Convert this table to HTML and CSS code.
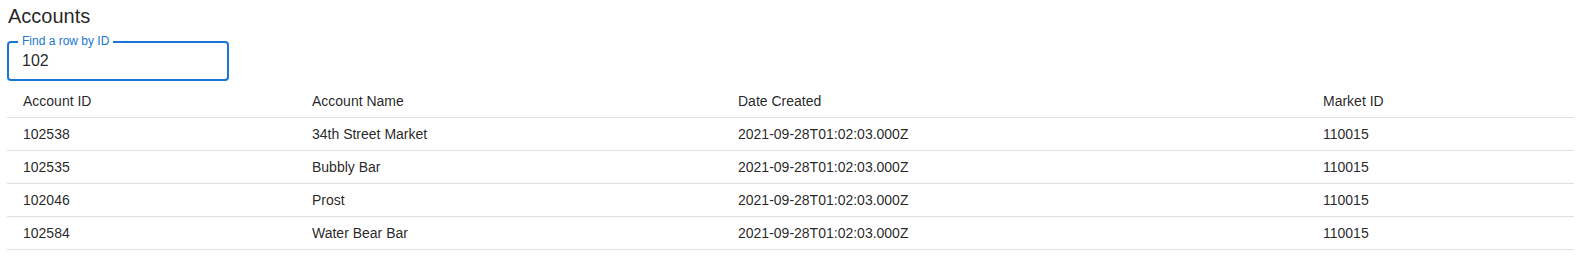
FILE: index.html
```html
<!DOCTYPE html>
<html lang="en">
<head>
<meta charset="utf-8">
<title>Accounts</title>
<link rel="stylesheet" href="styles.css">
</head>
<body>
<div class="page">
  <h1 class="title">Accounts</h1>
  <div class="field">
    <label class="field-label" for="rowid">Find a row by ID</label>
    <input class="field-input" id="rowid" type="text" value="102">
  </div>
  <table class="grid">
    <colgroup>
      <col class="c1"><col class="c2"><col class="c3"><col class="c4">
    </colgroup>
    <thead>
      <tr><th>Account ID</th><th>Account Name</th><th>Date Created</th><th>Market ID</th></tr>
    </thead>
    <tbody>
      <tr><td>102538</td><td>34th Street Market</td><td>2021-09-28T01:02:03.000Z</td><td>110015</td></tr>
      <tr><td>102535</td><td>Bubbly Bar</td><td>2021-09-28T01:02:03.000Z</td><td>110015</td></tr>
      <tr><td>102046</td><td>Prost</td><td>2021-09-28T01:02:03.000Z</td><td>110015</td></tr>
      <tr><td>102584</td><td>Water Bear Bar</td><td>2021-09-28T01:02:03.000Z</td><td>110015</td></tr>
    </tbody>
  </table>
</div>
</body>
</html>
```

FILE: styles.css
```css
html, body {
  margin: 0;
  padding: 0;
  background: #fff;
}
body {
  font-family: "Liberation Sans", Arial, sans-serif;
  color: rgba(0, 0, 0, 0.87);
}
.page {
  padding: 0 16px 0 7px;
  display: flex;
  flex-direction: column;
  align-items: flex-start;
}
.title {
  margin: 0;
  padding-left: 1px;
  font-size: 20px;
  font-weight: 400;
  line-height: 32px;
}
.field {
  position: relative;
  margin-top: 9px;
  width: 222px;
  height: 40px;
  box-sizing: border-box;
  border: 2px solid #1976d2;
  border-radius: 4px;
  display: flex;
}
.field-label {
  position: absolute;
  left: 9px;
  top: -9px;
  padding: 0 4px;
  background: #fff;
  color: #1976d2;
  font-size: 12px;
  line-height: 14px;
}
.field-input {
  flex: 1;
  min-width: 0;
  border: 0;
  outline: none;
  background: transparent;
  padding: 0 13px;
  font-family: "Liberation Sans", Arial, sans-serif;
  font-size: 16px;
  color: rgba(0, 0, 0, 0.87);
}
.grid {
  margin-top: 4px;
  width: 100%;
  border-collapse: collapse;
  table-layout: fixed;
  font-size: 14px;
}
.c1 { width: 289px; }
.c2 { width: 426px; }
.c3 { width: 585px; }
.c4 { width: auto; }
.grid th, .grid td {
  text-align: left;
  font-weight: 400;
  padding: 6px 16px;
  line-height: 20px;
  border-bottom: 1px solid #e0e0e0;
}
```
